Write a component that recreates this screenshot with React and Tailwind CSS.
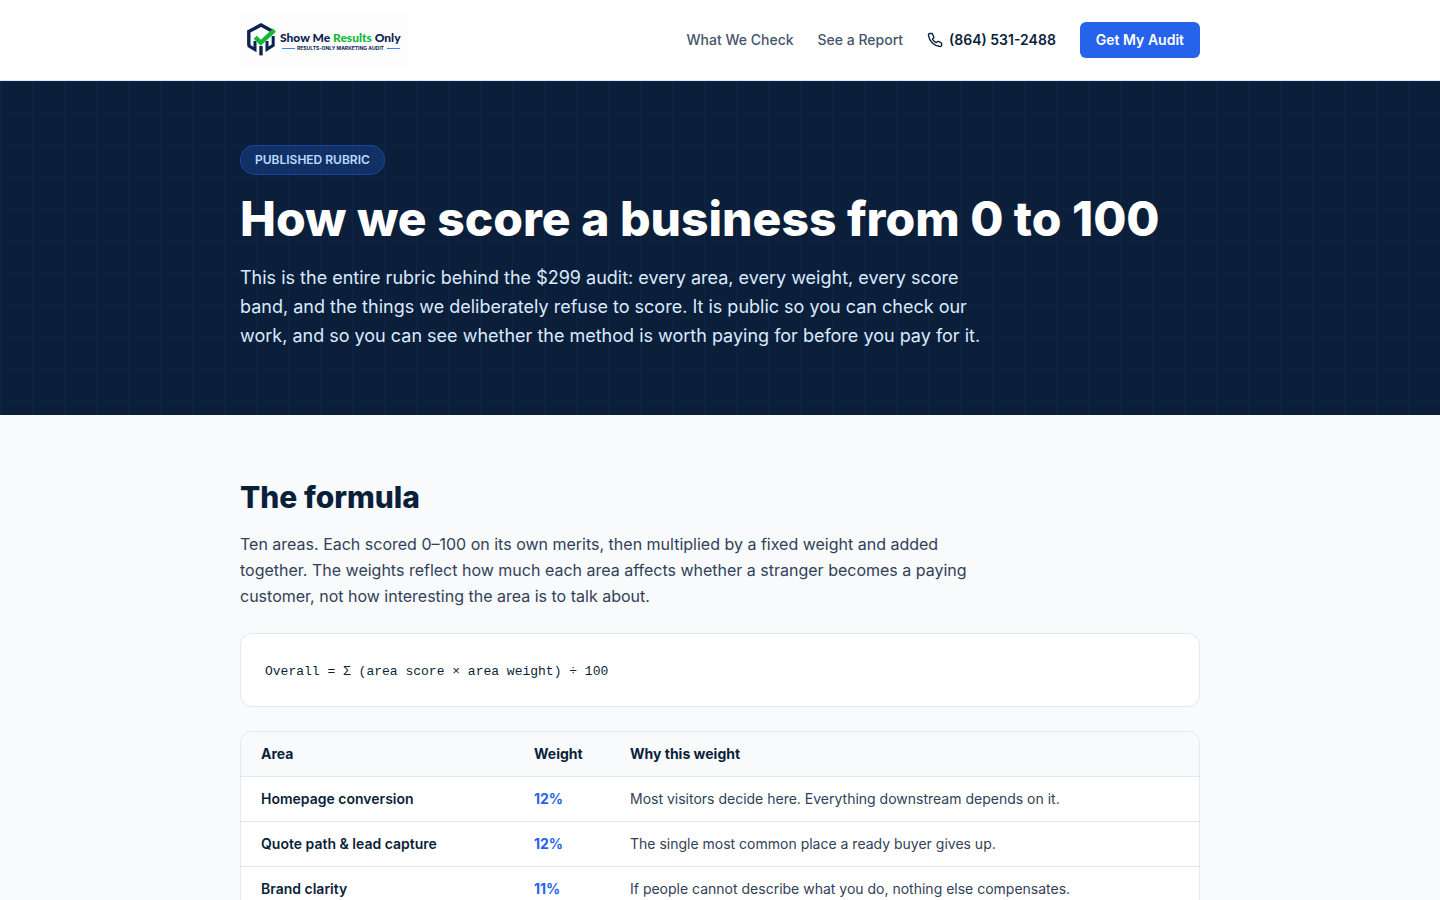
import React from 'react';

const rows = [
  { area: 'Homepage conversion', weight: '12%', why: 'Most visitors decide here. Everything downstream depends on it.' },
  { area: 'Quote path & lead capture', weight: '12%', why: 'The single most common place a ready buyer gives up.' },
  { area: 'Brand clarity', weight: '11%', why: 'If people cannot describe what you do, nothing else compensates.' },
];

const Logo = () => (
  <svg viewBox="0 0 168 56" className="h-14 w-auto" role="img" aria-label="Show Me Results Only">
    <rect width="168" height="56" fill="#fdfdfd" />
    {/* hexagon frame */}
    <path d="M8.8 33.5V19.6L21 12.9L32 19" fill="none" stroke="#0a2351" strokeWidth="3.4" />
    <path d="M8 33.4L15 37.6V29" fill="none" stroke="#0a2351" strokeWidth="3" />
    <path d="M33.2 24V33.4L27 37.2V29" fill="none" stroke="#0a2351" strokeWidth="3" />
    {/* centre bar */}
    <path d="M21 34V43.4" stroke="#0a2351" strokeWidth="3.4" />
    <path d="M15.2 25.2L20.8 30.8L34.4 18.2" fill="none" stroke="#12b83a" strokeWidth="4.4" />
    <text x="40" y="30" fontFamily="Lato, sans-serif" fontWeight="900" fontSize="12" fill="#0a2351">
      Show Me <tspan fill="#12b83a">Results</tspan> Only
    </text>
    <path d="M42 36.5H55M147 36.5H160" stroke="#3b82f6" strokeWidth="1" />
    <text x="57" y="38" fontFamily="Inter, sans-serif" fontWeight="700" fontSize="5" fill="#0a2351">
      RESULTS-ONLY MARKETING AUDIT
    </text>
  </svg>
);

const PhoneIcon = () => (
  <svg
    viewBox="0 0 24 24"
    className="h-4 w-4"
    fill="none"
    stroke="currentColor"
    strokeWidth="2"
    strokeLinecap="round"
    strokeLinejoin="round"
    aria-hidden="true"
  >
    <path d="M8.5 3.2 L10.2 7.4 a1.6 1.6 0 0 1-.4 1.7 L8.2 10.6 a14 14 0 0 0 5.6 5.4 l1.6-1.5 a1.6 1.6 0 0 1 1.7-.3 l3.9 1.7 a1.6 1.6 0 0 1 1 1.6 v2 a2.3 2.3 0 0 1-2.5 2.3 C10.600 21.200 3.600 14.200 2.200 5 A2.300 2.300 0 0 1 4.500 2.200 h2.500 a1.600 1.600 0 0 1 1.500 1z" />
  </svg>
);

const Header = () => (
  <header className="border-b border-slate-200 bg-white">
    <div className="mx-auto flex h-20 max-w-5xl items-center justify-between px-8">
      <a href="#">
        <Logo />
      </a>
      <nav className="flex items-center gap-6 text-sm">
        <a href="#check" className="font-medium text-slate-600">What We Check</a>
        <a href="#report" className="font-medium text-slate-600">See a Report</a>
        <a href="tel:8645312488" className="flex items-center gap-1.5 font-semibold text-[#0b1f3a]">
          <PhoneIcon />
          (864) 531-2488
        </a>
        <button type="button" className="h-9 rounded-md bg-[#2563eb] px-4 font-semibold text-white">
          Get My Audit
        </button>
      </nav>
    </div>
  </header>
);

const Hero = () => (
  <section className="bg-[#0b1f3a] bg-[linear-gradient(rgba(37,99,235,0.05)_1px,transparent_1px),linear-gradient(90deg,rgba(37,99,235,0.08)_1px,transparent_1px)] bg-[size:32px_32px] pt-16 pb-[65px]">
    <div className="mx-auto max-w-5xl px-8">
      <span className="inline-flex h-[30px] items-center rounded-full border border-[#2563eb]/40 bg-[#2563eb]/25 px-3.5 align-top text-xs font-semibold text-blue-200">
        PUBLISHED RUBRIC
      </span>
      <h1 className="mt-5 text-5xl leading-none font-extrabold text-white">
        How we score a business from 0 to 100
      </h1>
      <p className="mt-5 max-w-3xl text-lg leading-[29px] text-blue-100">
        This is the entire rubric behind the $299 audit: every area, every weight, every score band, and the things we
        deliberately refuse to score. It is public so you can check our work, and so you can see whether the method is
        worth paying for before you pay for it.
      </p>
    </div>
  </section>
);

const WeightTable = () => (
  <div className="mt-6 overflow-hidden rounded-xl border border-slate-200 bg-white">
    <table className="w-full table-fixed text-left text-sm">
      <thead className="bg-slate-50 text-[#0b1f3a]">
        <tr>
          <th scope="col" className="w-[273px] px-5 py-3 font-bold">Area</th>
          <th scope="col" className="w-24 px-5 py-3 font-bold">Weight</th>
          <th scope="col" className="px-5 py-3 font-bold">Why this weight</th>
        </tr>
      </thead>
      <tbody>
        {rows.map((row) => (
          <tr key={row.area} className="border-t border-slate-200">
            <td className="px-5 py-3 font-semibold text-[#0b1f3a]">{row.area}</td>
            <td className="px-5 py-3 font-bold text-[#2563eb]">{row.weight}</td>
            <td className="px-5 py-3 text-slate-700">{row.why}</td>
          </tr>
        ))}
      </tbody>
    </table>
  </div>
);

const App = () => (
  <div className="min-h-screen bg-slate-50 font-['Inter',sans-serif]">
    <Header />
    <main>
      <Hero />
      <section className="mx-auto max-w-5xl px-8 pt-16">
        <h2 className="text-3xl font-extrabold text-[#0b1f3a]">The formula</h2>
        <p className="mt-4 max-w-3xl text-base leading-[26px] text-slate-700">
          Ten areas. Each scored 0–100 on its own merits, then multiplied by a fixed weight and added together. The
          weights reflect how much each area affects whether a stranger becomes a paying customer, not how interesting
          the area is to talk about.
        </p>
        <div className="mt-6 rounded-xl border border-slate-200 bg-white px-6 pt-[26px] pb-[22px]">
          <code className="block font-['Liberation_Mono',monospace] text-[13px] leading-6 text-[#0b1f3a]">
            Overall = Σ (area score × area weight) ÷ 100
          </code>
        </div>
        <WeightTable />
      </section>
    </main>
  </div>
);

export default App;
